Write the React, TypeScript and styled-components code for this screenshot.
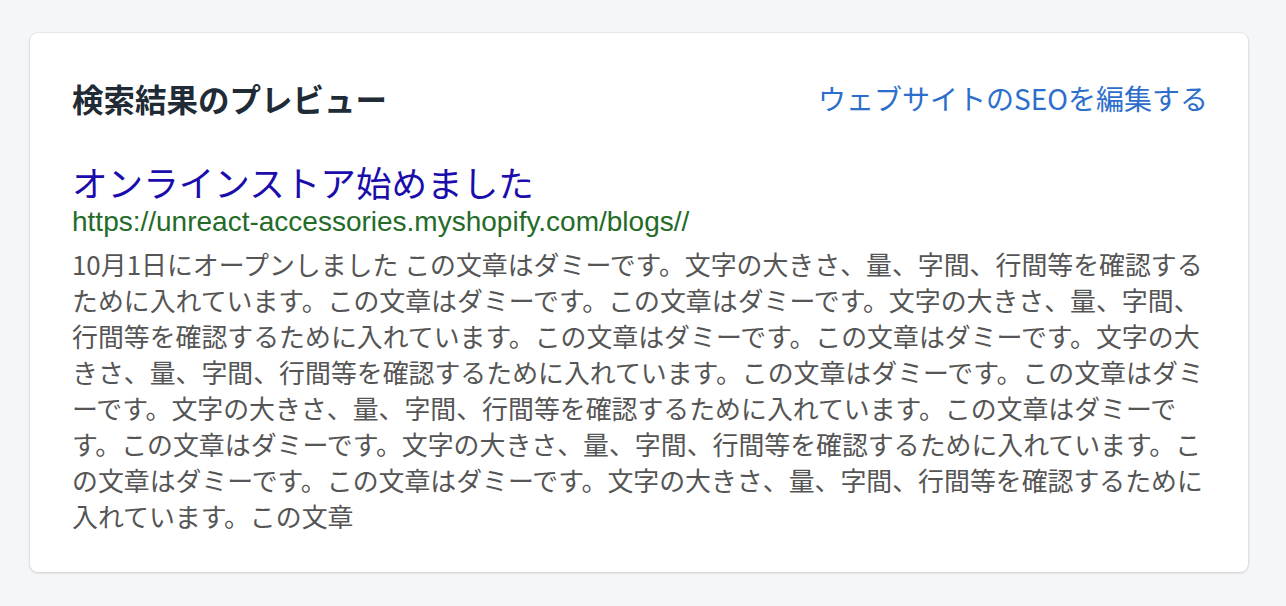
import React from "react";
import styled, { createGlobalStyle } from "styled-components";

const Global = createGlobalStyle`
  html, body { margin: 0; padding: 0; background: #f4f6f8; }
  body { font-family: "Noto Sans CJK JP", "Noto Sans", sans-serif; }
`;

const Page = styled.div`
  padding: 33px 38px 34px 30px;
`;

const Card = styled.section`
  background: #ffffff;
  border-radius: 8px;
  box-shadow: 0 0 0 1px rgba(63, 63, 68, 0.06), 0 1px 3px 0 rgba(63, 63, 68, 0.18);
  padding: 40px 40px 38px 42px;
`;

const Header = styled.div`
  display: flex;
  align-items: center;
  justify-content: space-between;
  height: 50px;
`;

const Heading = styled.h2`
  margin: 0;
  font-size: 31.5px;
  font-weight: 700;
  color: #212b36;
  font-family: "Noto Sans CJK JP", sans-serif;
`;

const EditLink = styled.a`
  font-size: 28px;
  color: #2c6ecb;
  text-decoration: none;
  font-family: "Noto Sans CJK JP", sans-serif;
`;

const Preview = styled.div`
  margin-top: 37px;
`;

const Title = styled.div`
  font-size: 35.6px;
  line-height: 44px;
  color: #1a0dab;
  font-family: "Noto Sans CJK JP", sans-serif;
`;

const Url = styled.div`
  font-size: 28px;
  line-height: 36px;
  color: #236b27;
  font-family: "Liberation Sans", Arial, sans-serif;
`;

const Description = styled.p`
  margin: 6px -4px 0 0;
  font-size: 25.9px;
  line-height: 36px;
  color: #555555;
  font-family: "Noto Sans CJK JP", sans-serif;
`;

const text =
  "10月1日にオープンしました この文章はダミーです。文字の大きさ、量、字間、行間等を確認するために入れています。この文章はダミーです。この文章はダミーです。文字の大きさ、量、字間、行間等を確認するために入れています。この文章はダミーです。この文章はダミーです。文字の大きさ、量、字間、行間等を確認するために入れています。この文章はダミーです。この文章はダミーです。文字の大きさ、量、字間、行間等を確認するために入れています。この文章はダミーです。この文章はダミーです。文字の大きさ、量、字間、行間等を確認するために入れています。この文章はダミーです。この文章はダミーです。文字の大きさ、量、字間、行間等を確認するために入れています。この文章";

export default function App() {
  return (
    <>
      <Global />
      <Page>
        <Card>
          <Header>
            <Heading>検索結果のプレビュー</Heading>
            <EditLink href="#">ウェブサイトのSEOを編集する</EditLink>
          </Header>
          <Preview>
            <Title>オンラインストア始めました</Title>
            <Url>https://unreact-accessories.myshopify.com/blogs//</Url>
            <Description>{text}</Description>
          </Preview>
        </Card>
      </Page>
    </>
  );
}
